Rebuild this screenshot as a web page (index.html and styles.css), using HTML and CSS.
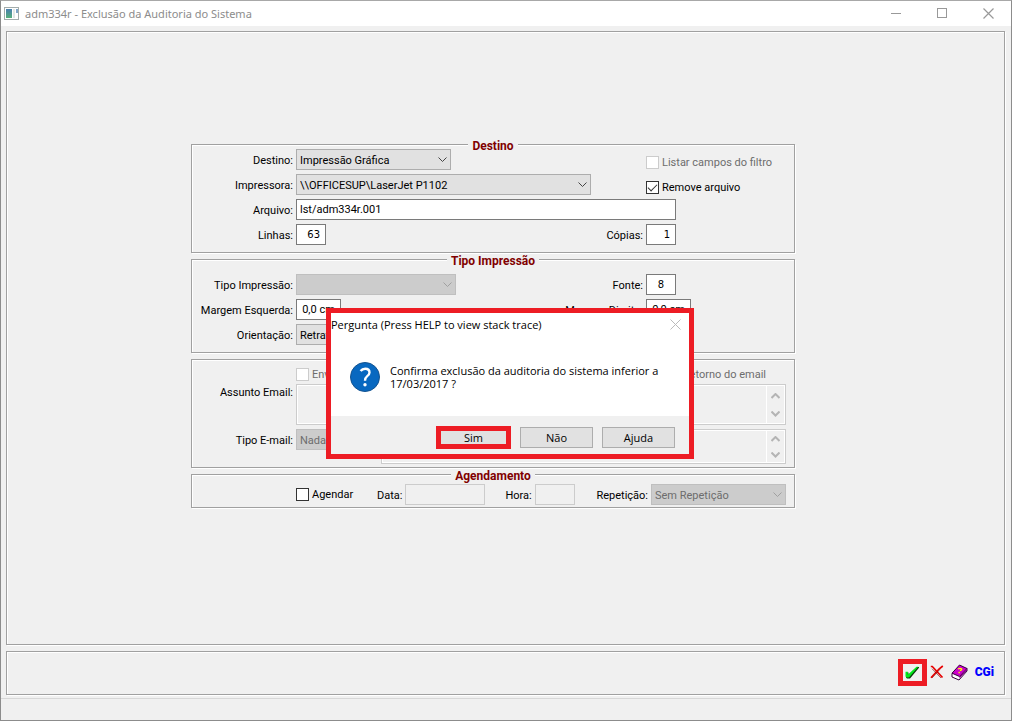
FILE: index.html
```html
<!DOCTYPE html>
<html lang="pt-BR">
<head>
<meta charset="utf-8">
<title>adm334r - Exclusão da Auditoria do Sistema</title>
<link rel="stylesheet" href="styles.css">
</head>
<body>
<div class="window">
  <header class="titlebar">
    <svg class="app-icon" width="15" height="13" viewBox="0 0 15 13" aria-hidden="true">
      <defs><linearGradient id="pane" x1="0" y1="0" x2="0" y2="1"><stop offset="0" stop-color="#4a7fb0"/><stop offset="1" stop-color="#56b07a"/></linearGradient></defs>
      <rect x=".5" y=".5" width="14" height="12" fill="#fff" stroke="#a3acab"/>
      <rect x="2" y="2" width="6" height="9" fill="url(#pane)"/>
      <rect x="9" y="2" width="2" height="9" fill="#e3e8e6"/>
      <rect x="12" y="2" width="2" height="4" fill="#7fa5c8"/>
    </svg>
    <h1 class="title">adm334r - Exclusão da Auditoria do Sistema</h1>
    <div class="window-controls">
      <button class="window-button" type="button" aria-label="Minimizar"><svg width="11" height="11"><path d="M0 5.500H10" stroke="#999"/></svg></button>
      <button class="window-button" type="button" aria-label="Maximizar"><svg width="11" height="11"><rect x=".5" y=".5" width="9" height="9" fill="none" stroke="#999"/></svg></button>
      <button class="window-button" type="button" aria-label="Fechar"><svg width="11" height="11"><path d="M.5.5l10 10M10.500.5l-10 10" stroke="#999" stroke-width="1.200"/></svg></button>
    </div>
  </header>

  <main class="panel workspace">
    <div class="form-area">
    <form class="form">
      <fieldset class="group">
        <legend class="legend">Destino</legend>
        <div class="row">
          <label class="label" for="destino">Destino:</label>
          <span class="select w-155"><select id="destino"><option>Impressão Gráfica</option></select><svg width="9" height="6"><path d="M.5.5l4 4 4-4"/></svg></span>
          <span class="aside check-cell"><label class="check is-disabled"><input type="checkbox" disabled>Listar campos do filtro</label></span>
        </div>
        <div class="row">
          <label class="label" for="impressora">Impressora:</label>
          <span class="select w-295"><select id="impressora"><option>\\OFFICESUP\LaserJet P1102</option></select><svg width="9" height="6"><path d="M.5.5l4 4 4-4"/></svg></span>
          <span class="aside check-cell"><label class="check"><input type="checkbox" checked>Remove arquivo</label></span>
        </div>
        <div class="row">
          <label class="label" for="arquivo">Arquivo:</label>
          <input class="text w-380" id="arquivo" type="text" value="lst/adm334r.001">
        </div>
        <div class="row">
          <label class="label" for="linhas">Linhas:</label>
          <input class="text number w-30" id="linhas" type="text" value="63">
          <label class="side-label" for="copias">Cópias:</label>
          <span class="aside"><input class="text number w-30" id="copias" type="text" value="1"></span>
        </div>
      </fieldset>

      <fieldset class="group group-print">
        <legend class="legend">Tipo Impressão</legend>
        <div class="row">
          <label class="label" for="tipo">Tipo Impressão:</label>
          <span class="select w-160 is-disabled"><select id="tipo" disabled><option></option></select><svg width="9" height="6"><path d="M.5.5l4 4 4-4"/></svg></span>
          <label class="side-label" for="fonte">Fonte:</label>
          <span class="aside"><input class="text number center w-30" id="fonte" type="text" value="8"></span>
        </div>
        <div class="row">
          <label class="label" for="esquerda">Margem Esquerda:</label>
          <input class="text center w-45" id="esquerda" type="text" value="0,0 cm">
          <label class="side-label" for="direita">Margem Direita:</label>
          <span class="aside"><input class="text center w-45" id="direita" type="text" value="0,0 cm"></span>
        </div>
        <div class="row">
          <label class="label" for="orientacao">Orientação:</label>
          <span class="select w-155"><select id="orientacao"><option>Retrato</option></select><svg width="9" height="6"><path d="M.5.5l4 4 4-4"/></svg></span>
        </div>
      </fieldset>

      <fieldset class="group group-mail">
        <div class="row row-checks">
          <label class="check is-disabled"><input type="checkbox" disabled>Enviar email</label>
          <label class="check is-disabled"><input type="checkbox" disabled>Retorno do email</label>
        </div>
        <div class="row row-top">
          <label class="label" for="assunto">Assunto Email:</label>
          <span class="memo memo-tall"><textarea id="assunto" disabled></textarea><span class="scroll"><svg width="9" height="6"><path d="M.5 5l4-4 4 4"/></svg><svg width="9" height="6"><path d="M.5.5l4 4 4-4"/></svg></span></span>
        </div>
        <div class="row row-top">
          <label class="label label-mid" for="tipo-email">Tipo E-mail:</label>
          <span class="select w-80 is-disabled"><select id="tipo-email" disabled><option>Nada</option></select><svg width="9" height="6"><path d="M.5.5l4 4 4-4"/></svg></span>
          <span class="memo memo-short"><textarea aria-label="Texto do email" disabled></textarea><span class="scroll"><svg width="9" height="6"><path d="M.5 5l4-4 4 4"/></svg><svg width="9" height="6"><path d="M.5.5l4 4 4-4"/></svg></span></span>
        </div>
      </fieldset>

      <fieldset class="group group-schedule">
        <legend class="legend">Agendamento</legend>
        <div class="row row-schedule">
          <label class="check"><input type="checkbox">Agendar</label>
          <span class="pair"><label for="data">Data:</label><input class="text w-80" id="data" type="text" disabled></span>
          <span class="pair"><label for="hora">Hora:</label><input class="text w-40" id="hora" type="text" disabled></span>
          <span class="pair pair-last"><label for="repeticao">Repetição:</label><span class="select w-135 is-disabled"><select id="repeticao" disabled><option>Sem Repetição</option></select><svg width="9" height="6"><path d="M.5.5l4 4 4-4"/></svg></span></span>
        </div>
      </fieldset>
    </form>

    <section class="dialog" role="dialog" aria-labelledby="dialog-title">
      <header class="dialog-head">
        <h2 class="dialog-title" id="dialog-title">Pergunta (Press HELP to view stack trace)</h2>
        <button class="dialog-close" type="button" aria-label="Fechar"><svg width="11" height="11"><path d="M.5.5l10 10M10.500.5l-10 10" stroke="#bbb"/></svg></button>
      </header>
      <div class="dialog-body">
        <svg width="30" height="30" viewBox="0 0 30 30" aria-hidden="true">
          <circle cx="15" cy="15" r="14.500" fill="#0868c0" stroke="#14538f"/>
          <path d="M10.600 9Q12.300 6.700 15.200 6.700Q19.500 6.700 19.500 10.500Q19.500 12.600 17 14.400Q15 15.900 15 18.800" fill="none" stroke="#fff" stroke-width="2.400"/>
          <circle cx="15" cy="22.800" r="1.700" fill="#fff"/>
        </svg>
        <p class="dialog-text">Confirma exclusão da auditoria do sistema inferior a 17/03/2017 ?</p>
      </div>
      <footer class="dialog-actions">
        <button class="button button-marked" type="button">Sim</button>
        <button class="button" type="button">Não</button>
        <button class="button" type="button">Ajuda</button>
      </footer>
    </section>
    </div>
  </main>

  <nav class="panel toolbar" aria-label="Ações">
    <button class="tool tool-marked" type="button" aria-label="Confirmar">
      <svg width="14" height="13" viewBox="0 0 14 13"><path d="M1 6.500h2.500V9L12 1h2v.8L5 12.500H2L1 11.500z" fill="#0a3a0a"/><path d="M.5 5.800H2.800V8.800L11.500.8h1.800L4 11.500H1.500L.5 10.500z" fill="#00e81a"/></svg>
    </button>
    <button class="tool" type="button" aria-label="Cancelar">
      <svg width="14" height="14" viewBox="0 0 14 14"><path d="M.8 1.500h1.500L12.500 12.500M12.800 1L9 4 1 12.800" fill="none" stroke="#e80000" stroke-width="1.700"/><path d="M2 3.700l9 9.300M10 4.300L2 13" fill="none" stroke="#700" stroke-width=".6"/></svg>
    </button>
    <button class="tool" type="button" aria-label="Ajuda">
      <svg width="17" height="17" viewBox="0 0 17 17"><path d="M1 9.500v3.500l7 3 8-9V4.500z" fill="#fff" stroke="#38003c"/><path d="M1 9.200L8.500 1 16 4.500 8.500 12.500z" fill="#cc00cc" stroke="#38003c"/><path d="M8.500 12.500L16 4.500v2L8.500 14.500z" fill="#850087"/><path d="M7 5q2-1.200 3.500-.3 1 1-1.500 2M7.500 8.500h1.300" fill="none" stroke="#ff0" stroke-width="1.300"/></svg>
    </button>
    <button class="tool tool-cgi" type="button">CGi</button>
  </nav>
  <footer class="statusbar"></footer>
</div>
</body>
</html>
```
FILE: styles.css
```css
*, *::after { box-sizing: border-box; }

body {
  margin: 0;
  background: #f0f0f0;
  color: #000;
  font: 11px/15px Roboto, "Liberation Sans", sans-serif;
}

button, input, select, textarea { font: inherit; color: inherit; margin: 0; }

h1, h2, p { margin: 0; font-weight: normal; }

svg { display: block; flex: none; }

.window {
  display: flex;
  flex-direction: column;
  min-height: 100vh;
  border: 1px solid #8c8c8c;
  border-top-color: #a8a8a8;
}

.titlebar {
  display: flex;
  align-items: center;
  height: 25px;
  padding-left: 3px;
  background: #fff;
}

.title {
  flex: 1;
  padding-left: 6px;
  color: #8c8c8c;
  font: 11px/16px "Noto Sans", "Open Sans", sans-serif;
}

.window-controls { display: flex; }

.window-button {
  display: grid;
  place-items: center;
  width: 46px;
  height: 25px;
  padding: 0;
  border: 0;
  background: none;
}

.panel {
  margin: 5px 6px 0 5px;
  border: 1px solid #a0a0a0;
  box-shadow: 1px 1px 0 #fff, inset 1px 1px 0 #fff;
}

.workspace {
  display: flex;
  flex: 1;
  align-items: center;
  justify-content: center;
  padding: 0 25px 24px 0;
}

.form-area { position: relative; width: 604px; }

.form { display: grid; gap: 6px; }

.group {
  position: relative;
  display: grid;
  gap: 4px;
  min-width: 0;
  margin: 0;
  padding: 4px 0 7px;
  border: 1px solid #a0a0a0;
  box-shadow: 1px 1px 0 #fff, inset 1px 1px 0 #fff;
}

.group-print { padding-top: 14px; }
.group-mail { padding: 8px 0 3px; }
.group-schedule { padding: 9px 0 2px; }

.legend {
  position: absolute;
  top: -6px;
  left: 0;
  right: 0;
  width: fit-content;
  margin: 0 auto;
  padding: 0 4px;
  background: #f0f0f0;
  color: #800000;
  font-size: 12px;
  font-weight: bold;
}

.row { display: flex; align-items: center; gap: 3px; min-height: 21px; }
.row-top { align-items: flex-start; }
.label, .side-label, .pair label { padding-top: 1px; text-align: right; white-space: nowrap; }
.label { width: 101px; }
.label-mid { line-height: 21px; }
.side-label { margin-left: auto; }
.aside { width: 148px; }
.check-cell { align-self: flex-start; height: 21px; margin-left: auto; padding-top: 6px; }

.check { display: flex; align-items: center; gap: 3px; white-space: nowrap; }
.check.is-disabled { color: #6d6d6d; }

.check input {
  appearance: none;
  display: grid;
  justify-content: center;
  width: 13px;
  height: 13px;
  border: 1px solid #333;
  background: #fff;
}

.check input:disabled { border-color: #ccc; }

.check input:checked::after {
  content: "";
  width: 9px;
  height: 5px;
  margin-top: 2px;
  border: solid #333;
  border-width: 0 0 1px 1px;
  transform: rotate(-45deg);
}

.row-checks { justify-content: space-between; min-height: 12px; padding: 0 28px 0 104px; }
.row-checks .check { height: 12px; }
.row-schedule { gap: 20px; padding: 0 8px 0 104px; }
.row-schedule .check { width: 61px; }
.pair { display: flex; align-items: center; gap: 3px; }
.pair-last { margin-left: auto; }

.select { position: relative; display: block; height: 21px; }

.select select {
  appearance: none;
  width: 100%;
  height: 21px;
  padding: 1px 3px 0;
  border: 1px solid #adadad;
  border-radius: 0;
  background: #e1e1e1;
}

.select svg {
  position: absolute;
  top: 8px;
  right: 4px;
  fill: none;
  stroke: #444;
  pointer-events: none;
}

.select.is-disabled select { border-color: #bfbfbf; background: #ccc; color: #6d6d6d; opacity: 1; }
.select.is-disabled svg { stroke: #a0a0a0; }

.text {
  height: 21px;
  padding: 0 3px;
  border: 1px solid #7a7a7a;
  border-radius: 0;
  background: #fff;
}

.text:disabled { border-color: #ccc; background: #f0f0f0; }

.number { padding-right: 5px; font: 10px/14px "DejaVu Sans", sans-serif; text-align: right; }
.center { padding: 0; text-align: center; }

.w-30 { width: 30px; }
.w-40 { width: 40px; }
.w-45 { width: 45px; }
.w-80 { width: 80px; }
.w-135 { width: 135px; }
.w-155 { width: 155px; }
.w-160 { width: 160px; }
.w-295 { width: 295px; }
.w-380 { width: 380px; }

.memo { display: flex; flex: 1; margin-right: 8px; border: 1px solid #ccc; }
.memo-tall { height: 41px; }
.memo-short { height: 35px; margin-left: 2px; }

.memo textarea {
  flex: 1;
  min-width: 0;
  border: 1px solid #fff;
  background: #f0f0f0;
  resize: none;
}

.scroll {
  display: flex;
  flex-direction: column;
  align-items: center;
  justify-content: space-between;
  width: 18px;
  padding: 7px 0 6px;
  border: 1px solid #fff;
  border-left: 0;
}

.memo-short .scroll { padding: 5px 0 4px; }

.scroll svg { fill: none; stroke: #b4b4b4; stroke-width: 2; }

.dialog {
  position: absolute;
  top: 164px;
  left: 135px;
  width: 368px;
  border: 5px solid #ed1c24;
  background: #fff;
  font: 11px/13px "Open Sans", "Noto Sans", sans-serif;
}

.dialog-head { display: flex; align-items: center; justify-content: space-between; height: 23px; }
.dialog-title { font-size: 11px; }
.dialog-close { padding: 0 8px 0 0; border: 0; background: none; }

.dialog-body { display: flex; gap: 10px; height: 80px; padding: 26px 24px 0 19px; }
.dialog-text { padding-top: 2px; }

.dialog-actions {
  display: flex;
  align-items: center;
  justify-content: flex-end;
  gap: 9px;
  height: 38px;
  padding: 4px 14px 0 0;
  background: #f0f0f0;
}

.button {
  width: 73px;
  height: 21px;
  padding: 0;
  border: 1px solid #adadad;
  background: #e1e1e1;
}

.button-marked { width: 75px; height: 23px; border: 5px solid #ed1c24; line-height: 13px; }

.toolbar {
  display: flex;
  align-items: center;
  justify-content: flex-end;
  gap: 7px;
  height: 44px;
  margin-top: 6px;
  padding: 0 10px 2px 0;
}

.tool { display: grid; place-items: center; height: 27px; padding: 0; border: 0; background: none; }
.tool-marked { width: 29px; border: 5px solid #ed1c24; margin-right: -4px; }
.tool-cgi { color: #00f; font: 900 12px/14px Roboto, sans-serif; }

.statusbar { height: 22px; margin-top: 3px; border-top: 1px solid #d7d7d7; }
```
